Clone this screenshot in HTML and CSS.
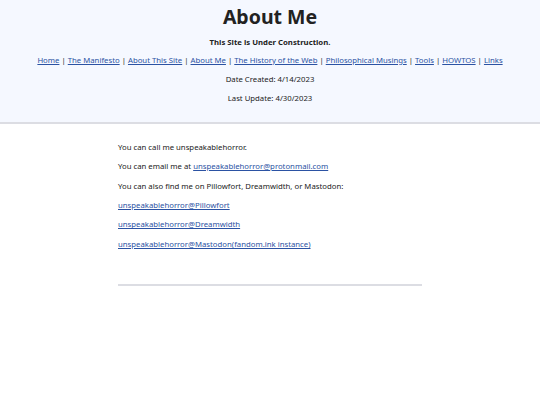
FILE: index.html
```html
<!DOCTYPE html>
<html lang="en">
<head>
<meta charset="utf-8">
<title>About Me</title>
<link rel="stylesheet" href="styles.css">
</head>
<body>
<header class="site-header">
  <h1 class="title">About Me</h1>
  <p class="subtitle">This Site is Under Construction.</p>
  <nav class="nav">
    <a href="#">Home</a> | <a href="#">The Manifesto</a> | <a href="#">About This Site</a> | <a href="#">About Me</a> | <a href="#">The History of the Web</a> | <a href="#">Philosophical Musings</a> | <a href="#">Tools</a> | <a href="#">HOWTOS</a> | <a href="#">Links</a>
  </nav>
  <p class="meta">Date Created: 4/14/2023</p>
  <p class="meta">Last Update: 4/30/2023</p>
</header>
<main class="content">
  <p>You can call me unspeakablehorror.</p>
  <p>You can email me at <a href="#">unspeakablehorror@protonmail.com</a></p>
  <p>You can also find me on Pillowfort, Dreamwidth, or Mastodon:</p>
  <p><a href="#">unspeakablehorror@Pillowfort</a></p>
  <p><a href="#">unspeakablehorror@Dreamwidth</a></p>
  <p><a href="#">unspeakablehorror@Mastodon(fandom.ink instance)</a></p>
  <hr class="rule">
</main>
</body>
</html>
```
FILE: styles.css
```css
html, body {
  margin: 0;
  padding: 0;
  background: #ffffff;
}
body {
  font-family: "Noto Sans", "Open Sans", sans-serif;
  font-size: 7.75px;
  color: #222222;
}
a {
  color: #2b52a3;
}
.site-header {
  background: #f5f8ff;
  border-bottom: 2px solid #dcdde3;
  text-align: center;
  padding: 3px 0 18.5px;
}
.title {
  margin: 0;
  font-size: 19.5px;
  line-height: 28px;
  font-weight: 700;
  color: #222222;
}
.subtitle {
  margin: 5.5px 0 0;
  font-weight: 700;
  line-height: 11px;
}
.nav {
  margin: 7px 0 0;
  line-height: 11px;
}
.meta {
  margin: 8.2px 0 0;
  line-height: 11px;
}
.content {
  width: 304px;
  margin: 0 auto;
  padding-top: 17.5px;
}
.content p {
  margin: 0 0 8.4px;
  line-height: 11px;
}
.rule {
  border: 0;
  height: 2px;
  background: #dcdde3;
  margin: 34px 0 0;
}
```
